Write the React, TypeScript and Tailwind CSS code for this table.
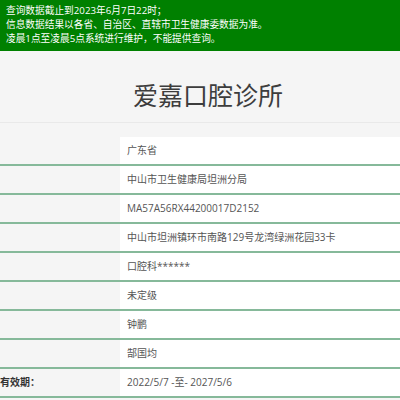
const rows: { label: string; value: string }[] = [
  { label: '', value: '广东省' },
  { label: '', value: '中山市卫生健康局坦洲分局' },
  { label: '', value: 'MA57A56RX44200017D2152' },
  { label: '', value: '中山市坦洲镇环市南路129号龙湾绿洲花园33卡' },
  { label: '', value: '口腔科******' },
  { label: '', value: '未定级' },
  { label: '', value: '钟鹏' },
  { label: '', value: '郜国均' },
  { label: '有效期：', value: '2022/5/7 -至- 2027/5/6' },
]

export default function App() {
  return (
    <div
      className="w-[400px] h-[400px] overflow-hidden bg-[#f5f5f5]"
      style={{ fontFamily: '"Open Sans", "Noto Sans CJK SC", sans-serif' }}
    >
      <div className="bg-[#008000] h-[51px] pl-[6px] pt-[4px] text-[9.7px] leading-[14px] text-white">
        <p>查询数据截止到2023年6月7日22时；</p>
        <p>信息数据结果以各省、自治区、直辖市卫生健康委数据为准。</p>
        <p>凌晨1点至凌晨5点系统进行维护，不能提供查询。</p>
      </div>

      <div className="h-[72px] flex items-center justify-center pl-[16px] pt-[18px] border-b border-[#e9e9e9]">
        <h1 className="text-[25px] leading-none text-[#3d3d3d]">爱嘉口腔诊所</h1>
      </div>

      <div className="mt-[14px]">
        {rows.map((r, i) => (
          <div key={i} className="flex h-[29px] border-b-2 border-[#86b99a]">
            <div className="w-[120px] flex items-center text-[10px] font-bold text-[#333]">
              {r.label}
            </div>
            <div className="flex-1 bg-white flex items-center pl-[7px] text-[10px] text-[#555]">
              {r.value}
            </div>
          </div>
        ))}
      </div>
    </div>
  )
}
